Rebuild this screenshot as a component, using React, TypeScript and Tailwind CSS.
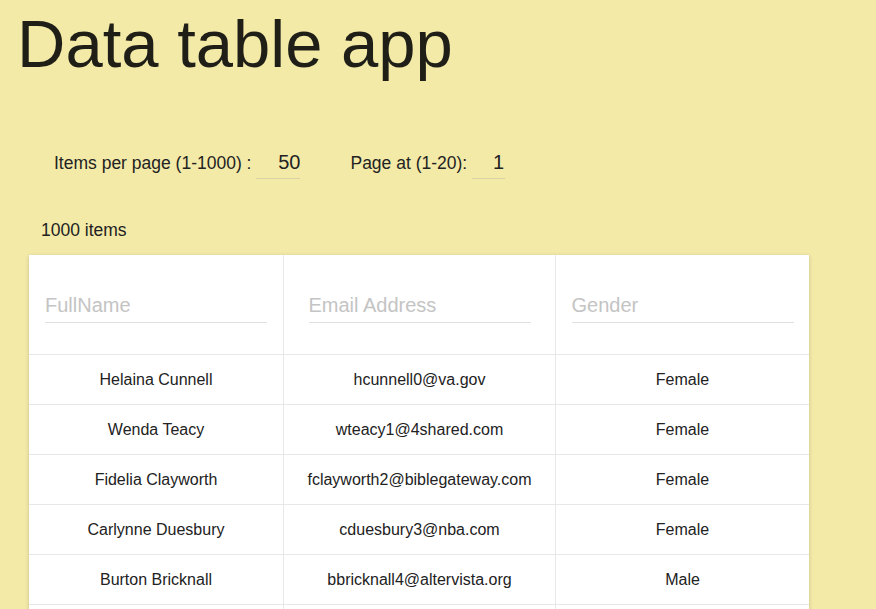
import React from "react";

const rows = [
  ["Helaina Cunnell", "hcunnell0@va.gov", "Female"],
  ["Wenda Teacy", "wteacy1@4shared.com", "Female"],
  ["Fidelia Clayworth", "fclayworth2@biblegateway.com", "Female"],
  ["Carlynne Duesbury", "cduesbury3@nba.com", "Female"],
  ["Burton Bricknall", "bbricknall4@altervista.org", "Male"],
];

export default function App() {
  return (
    <div
      className="h-[609px] w-full bg-[#f3eaa8] text-[#222] overflow-hidden"
      style={{ fontFamily: '"Liberation Sans", Arial, sans-serif' }}
    >
      <h1 className="pl-[17px] pt-[6px] text-[67px] leading-[75px] font-normal text-[#1f1f17]">
        Data table app
      </h1>
      <div className="mt-[66px] flex h-[32px] items-center pl-[54px] text-[17.5px]">
        <span>Items per page (1-1000) :</span>
        <input
          readOnly
          value="50"
          className="ml-[5px] h-[32px] w-[44px] border-b border-[#d8d2a6] bg-transparent text-right text-[20px] outline-none"
        />
        <span className="ml-[50px]">Page at (1-20):</span>
        <input
          readOnly
          value="1"
          className="ml-[5px] h-[32px] w-[33px] border-b border-[#d8d2a6] bg-transparent text-right pr-[1px] text-[20px] outline-none"
        />
      </div>
      <div className="mt-[41px] pl-[41px] text-[17.5px] leading-[20px]">1000 items</div>
      <div className="ml-[29px] mt-[15px] w-[780px] bg-white shadow-[0_1px_4px_rgba(0,0,0,0.18)]">
        <div className="grid h-[100px] grid-cols-[255px_272px_253px] border-b border-[#e8e8e8]">
          {["FullName", "Email Address", "Gender"].map((p, i) => (
            <div
              key={p}
              className={`flex items-center justify-center pt-[3px] ${i < 2 ? "border-r border-[#e8e8e8]" : ""}`}
            >
              <input
                placeholder={p}
                className="h-[34px] w-[222px] border-b border-[#e0e0e0] bg-transparent text-[20px] text-[#222] outline-none placeholder:text-[#c4c4c4]"
              />
            </div>
          ))}
        </div>
        {rows.map((r) => (
          <div
            key={r[1]}
            className="grid h-[50px] grid-cols-[255px_272px_253px] border-b border-[#e8e8e8] text-[16px]"
          >
            {r.map((c, i) => (
              <div
                key={i}
                className={`flex items-center justify-center ${i < 2 ? "border-r border-[#e8e8e8]" : ""}`}
              >
                {c}
              </div>
            ))}
          </div>
        ))}
        <div className="grid h-[50px] grid-cols-[255px_272px_253px]">
          <div className="border-r border-[#e8e8e8]" />
          <div className="border-r border-[#e8e8e8]" />
          <div />
        </div>
      </div>
    </div>
  );
}
